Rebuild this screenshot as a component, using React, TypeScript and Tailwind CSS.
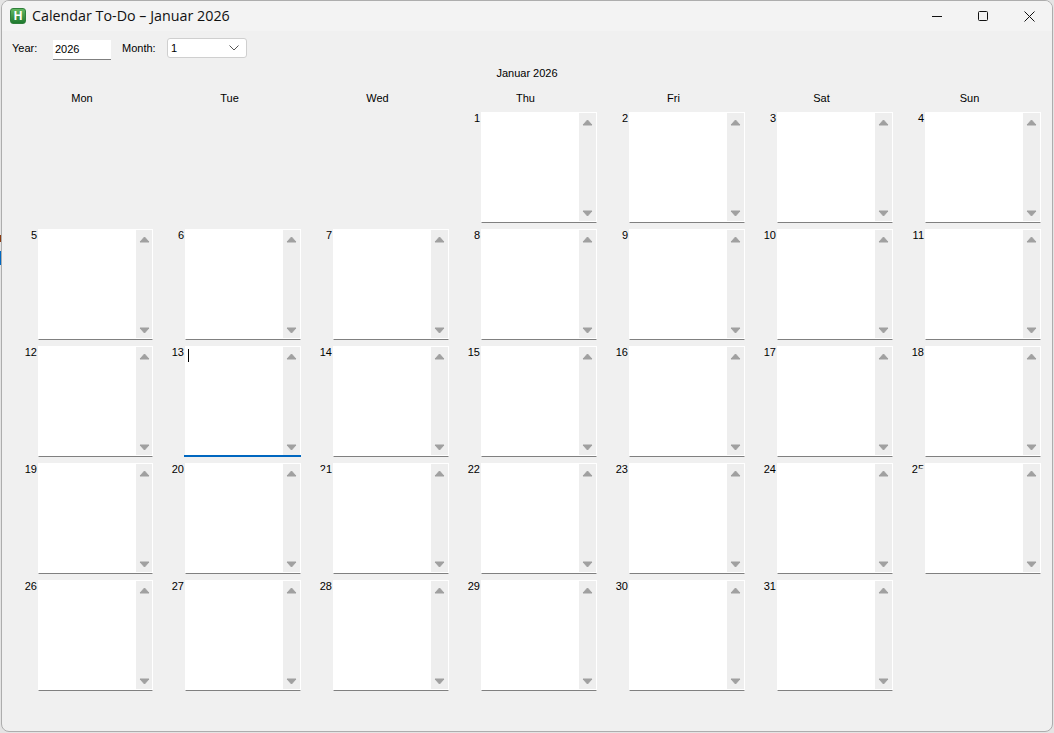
import React from 'react';

const WEEKDAYS = ['Mon', 'Tue', 'Wed', 'Thu', 'Fri', 'Sat', 'Sun'];
const FIRST_OFFSET = 3;
const DAYS = 31;

function Arrow({ down }: { down?: boolean }) {
  return (
    <svg width="11" height="7" viewBox="0 0 11 7" className="block">
      <polygon
        points={down ? '1,1 10,1 5.5,6' : '1,6 10,6 5.5,1'}
        fill="#a0a0a0"
        stroke="#a0a0a0"
        strokeWidth="1"
        strokeLinejoin="round"
      />
    </svg>
  );
}

// a few numbers are only half repainted in the screenshot
function DayLabel({ day }: { day: number }) {
  const s = String(day);
  if (day === 21) {
    return (
      <span>
        <span className="inline-block [clip-path:inset(0_0_38%_0)]">{s[0]}</span>
        {s[1]}
      </span>
    );
  }
  if (day === 25) {
    return (
      <span>
        {s[0]}
        <span className="inline-block [clip-path:inset(0_0_58%_0)]">{s[1]}</span>
      </span>
    );
  }
  return <span>{s}</span>;
}

function DayCell({ day, firstCol }: { day: number; firstCol: boolean }) {
  const focused = day === 13;
  return (
    <div className="flex h-[111px]">
      <div className="w-[32px] shrink-0 whitespace-nowrap flex justify-end pr-px text-[11px] leading-[13px] text-black">
        <DayLabel day={day} />
      </div>
      <div className="relative flex flex-1 bg-white border-x border-t border-white border-b border-b-[#808080]">
        <div className="flex-1 pl-[2px] pt-[2px]">
          {focused && <div className="w-px h-[13px] bg-black" />}
        </div>
        <div
          className={`${firstCol ? 'w-[16px]' : 'w-[17px]'} bg-[#eeeeee] flex flex-col items-center justify-between pt-[6px] pb-[4px] mb-px`}
        >
          <Arrow />
          <Arrow down />
        </div>
        {focused && <div className="absolute -left-[2px] -right-px -bottom-px h-[2px] bg-[#0067c0]" />}
      </div>
    </div>
  );
}

export default function App() {
  const cells: (number | null)[] = [
    ...Array.from({ length: FIRST_OFFSET }, () => null),
    ...Array.from({ length: DAYS }, (_, i) => i + 1),
  ];

  return (
    <div
      className="relative w-[1054px] h-[733px] bg-[#e4e4e4] pl-px pr-px pb-px overflow-hidden text-black"
      style={{ fontFamily: '"Liberation Sans", Arial, sans-serif' }}
    >
      {/* stuff from the window behind */}
      <div className="absolute left-0 top-[235px] w-px h-[7px] bg-[#8a3a10]" />
      <div className="absolute left-0 top-[251px] w-px h-[14px] bg-[#0067c0]" />

      <div className="h-full flex flex-col bg-[#f0f0f0] border border-[#adadad] rounded-[8px] overflow-hidden">
        {/* Title bar */}
        <div className="h-[30px] shrink-0 bg-[#f3f3f3] flex items-center justify-between">
          <div className="flex items-center pl-[8px]">
            <div className="w-[16px] h-[16px] rounded-[3px] bg-gradient-to-b from-[#62b862] to-[#1d7a30] border border-[#2f7f3a] flex items-center justify-center text-white text-[12px] font-bold leading-none">
              H
            </div>
            <span
              className="ml-[6px] text-[14.3px] leading-[20px] text-[#111]"
              style={{ fontFamily: '"Open Sans", "Noto Sans", sans-serif' }}
            >
              Calendar To-Do – Januar 2026
            </span>
          </div>
          <div className="flex h-full">
            <div className="w-[46px] flex items-center justify-center">
              <svg width="10" height="10" viewBox="0 0 10 10"><path d="M0 5.5H10" stroke="#111" strokeWidth="1" /></svg>
            </div>
            <div className="w-[46px] flex items-center justify-center">
              <svg width="10" height="10" viewBox="0 0 10 10"><rect x="0.5" y="0.5" width="9" height="9" rx="1" fill="none" stroke="#111" strokeWidth="1" /></svg>
            </div>
            <div className="w-[46px] flex items-center justify-center">
              <svg width="11" height="11" viewBox="0 0 11 11"><path d="M0.5 0.5L10.5 10.5M10.5 0.5L0.5 10.5" stroke="#111" strokeWidth="1" /></svg>
            </div>
          </div>
        </div>

        {/* Toolbar */}
        <div className="h-[30px] shrink-0 flex items-start pl-[10px] pt-[7px] text-[11px]">
          <span className="w-[41px] leading-[20px]">Year:</span>
          <div className="w-[58px] h-[20px] mt-[2px] bg-white border-b border-[#7f7f7f] pl-[2px] leading-[19px]">2026</div>
          <span className="ml-[11px] w-[45px] leading-[20px]">Month:</span>
          <div className="w-[80px] h-[20px] bg-white border border-[#cfcfcf] rounded-[3px] flex items-center justify-between pl-[3px] pr-[7px]">
            <span>1</span>
            <svg width="10" height="6" viewBox="0 0 10 6"><path d="M0.5 0.5L5 5L9.5 0.5" fill="none" stroke="#555" strokeWidth="1" /></svg>
          </div>
        </div>

        <div className="h-[24px] shrink-0 text-center text-[11px] leading-[24px]">Januar 2026</div>

        {/* Weekdays */}
        <div className="h-[27px] shrink-0 grid grid-cols-[147px_repeat(6,148px)] pl-[4px] text-[11px] leading-[26px]">
          {WEEKDAYS.map(d => (
            <div key={d} className="text-center pl-[5px]">{d}</div>
          ))}
        </div>

        {/* Days */}
        <div className="grid grid-cols-[147px_repeat(6,148px)] gap-y-[6px] pl-[4px]">
          {cells.map((day, i) =>
            day === null ? <div key={i} /> : <DayCell key={i} day={day} firstCol={i % 7 === 0} />
          )}
        </div>
      </div>
    </div>
  );
}
